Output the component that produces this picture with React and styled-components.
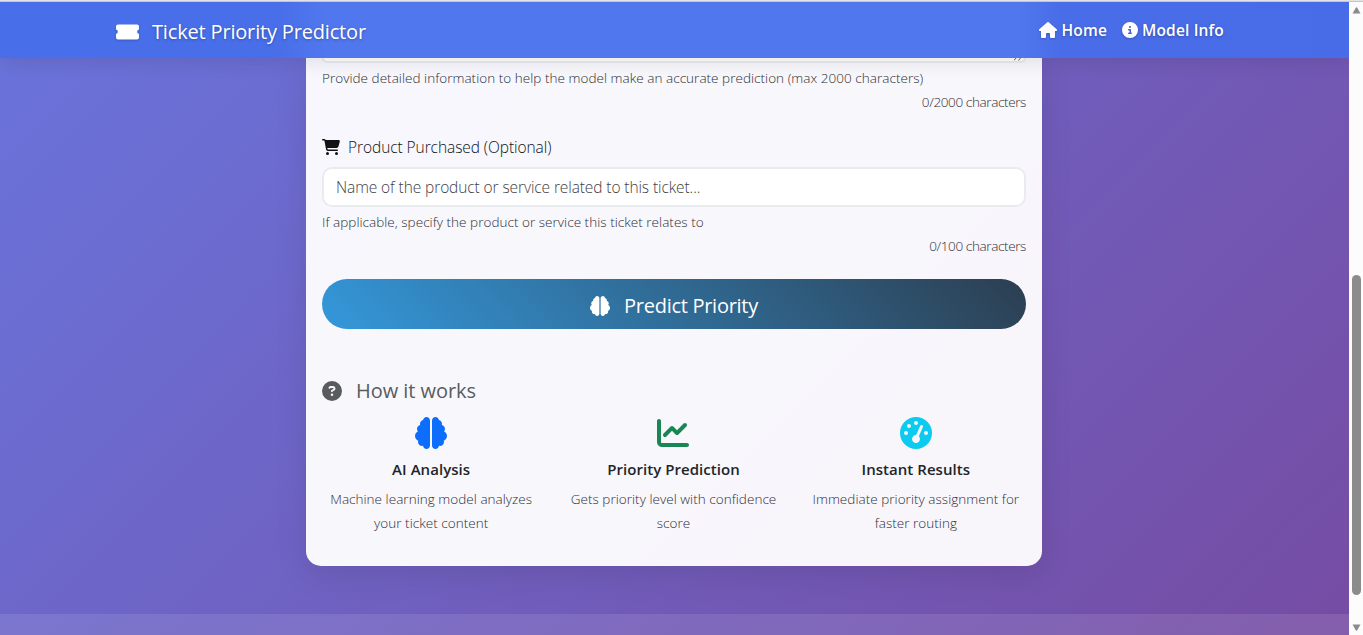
import React from "react";
import styled, { createGlobalStyle } from "styled-components";
import {
  FaHouse, FaCircleInfo, FaCartShopping, FaBrain,
  FaChartLine, FaGaugeHigh, FaCircleQuestion,
} from "react-icons/fa6";

const Global = createGlobalStyle`
  * { box-sizing: border-box; }
  html, body, #root { margin: 0; height: 100%; overflow: hidden; }
  body { font-family: "Open Sans", "Noto Sans", sans-serif; font-size: 16px; line-height: 24px; color: #212529; }
`;

const Window = styled.div`
  height: 635px;
  display: flex;
  flex-direction: column;
  border-top: 1px solid #e3e3e6;
`;
const Viewport = styled.div`
  flex: 1;
  min-height: 0;
  display: flex;
  border-top: 1px solid #c4c6cc;
`;
const Page = styled.div`
  flex: 1;
  display: flex;
  flex-direction: column;
  overflow: hidden;
  background: linear-gradient(135deg, #667eea 0%, #764ba2 100%) 0 -514px / 100% 1197px no-repeat;
`;
const Navbar = styled.header`
  position: relative;
  z-index: 2;
  flex: none;
  height: 56px;
  padding: 0 125px 0 116px;
  display: flex;
  justify-content: space-between;
  background: linear-gradient(90deg, #486fe9 0, #486fe9 280px, #5077ed 325px, #5077ed 1020px, #496de8 1060px, #486ce8 100%);
  box-shadow: 0 4px 20px rgba(0, 0, 0, 0.1);
  color: #fff;
  text-shadow: 0 1px 3px rgba(0, 0, 0, 0.3);
  svg { filter: drop-shadow(0 1px 1px rgba(0, 0, 0, 0.2)); }
`;
const Brand = styled.div`
  display: flex;
  align-items: center;
  gap: 13px;
  padding-top: 4px;
  font-size: 20px;
  letter-spacing: -0.17px;
`;
const Nav = styled.nav`
  display: flex;
  align-items: center;
  gap: 15px;
`;
const NavLink = styled.a`
  display: flex;
  align-items: center;
  gap: 4px;
  font-size: 15.5px;
  font-weight: 600;
  letter-spacing: 0.17px;
`;
const Main = styled.main`
  flex: 1;
  display: flex;
  flex-direction: column;
  align-items: center;
  padding-right: 1px;
`;
const Card = styled.section`
  width: 736px;
  height: 508px;
  padding: 0 16px;
  border-radius: 0 0 15px 15px;
  background: rgba(255, 255, 255, 0.95);
  box-shadow: 0 8px 32px rgba(0, 0, 0, 0.1);
`;
const TextareaEnd = styled.div`
  height: 5px;
  margin-bottom: 3px;
  display: flex;
  justify-content: flex-end;
  padding-right: 3px;
  border: 2px solid #e9ecef;
  border-top: 0;
  border-radius: 0 0 10px 10px;
  background: #fff;
`;
const Small = styled.div`
  font-size: 13.5px;
  font-weight: 300;
  color: #2c2f33;
  letter-spacing: ${(p) => p.$track ?? 0.035}px;
  text-align: ${(p) => p.$align || "left"};
  white-space: nowrap;
`;
const Label = styled.label`
  display: flex;
  align-items: center;
  gap: 8px;
  margin: 21px 0 8px;
  font-size: 15.5px;
  font-weight: 300;
  color: #101214;
  letter-spacing: -0.07px;
`;
const Input = styled.input`
  display: block;
  width: 100%;
  height: 40px;
  margin-bottom: 3px;
  padding: 0 12px;
  border: 2px solid #e9ecef;
  border-radius: 10px;
  background: #fff;
  font: 300 15.5px "Open Sans", sans-serif;
  letter-spacing: -0.1px;
  &::placeholder { color: #3e4145; opacity: 1; }
`;
const PredictButton = styled.button`
  display: flex;
  align-items: center;
  justify-content: center;
  gap: 14px;
  width: 100%;
  height: 50px;
  margin: 21px 0 48px;
  padding: 3px 0 0;
  border: 0;
  border-radius: 25px;
  background: linear-gradient(45deg, #3498db, #2c3e50);
  color: #fff;
  font: 20px "Open Sans", sans-serif;
  letter-spacing: -0.28px;
`;
const Heading = styled.h2`
  display: flex;
  align-items: center;
  gap: 14px;
  height: 28px;
  margin: 0 0 12px;
  color: #595c5f;
  font-size: 20px;
  font-weight: 400;
  letter-spacing: -0.05px;
`;
const Features = styled.div`
  display: grid;
  grid-template-columns: repeat(3, 1fr);
  margin: 0 -11px 0 -12px;
`;
const Feature = styled.div`
  display: flex;
  flex-direction: column;
  align-items: center;
  color: ${(p) => p.$color};
`;
const FeatureTitle = styled.h3`
  margin: 8px 0 6px;
  color: #212529;
  font-size: 15px;
  font-weight: 600;
  letter-spacing: 0.05px;
`;
const Footer = styled.footer`
  height: 21px;
  flex: none;
  background: rgba(255, 255, 255, 0.1);
`;
const Scrollbar = styled.div`
  width: 14px;
  display: flex;
  flex-direction: column;
  align-items: center;
  justify-content: space-between;
  padding: 5px 0 4px;
  background: #fcfcfc;
`;
const Thumb = styled.div`
  width: 9px;
  height: 320px;
  margin-top: 260px;
  margin-bottom: 28px;
  margin-left: 1px;
  border-radius: 5px;
  background: #8b8b8b;
`;
const ArrowIcon = styled.svg`
  flex: none;
`;

const Arrow = ({ down }) => (
  <ArrowIcon width="9" height="7" viewBox="0 0 9 7">
    <path d={down ? "M0.5 0.5h8L5.2 6.3q-.7 1-1.4 0Z" : "M0.5 6.5h8L5.2.7q-.7-1-1.4 0Z"} fill="#8b8b8b" />
  </ArrowIcon>
);

const Ticket = () => (
  <svg width="23" height="16" viewBox="0 0 23 16" fill="currentColor">
    <path d="M2 .5h19a2 2 0 0 1 2 2v3a2.3 2.3 0 0 0 0 4.500v3.500a2 2 0 0 1-2 2H2a2 2 0 0 1-2-2V10a2.300 2.300 0 0 0 0-4.500v-3a2 2 0 0 1 2-2Z" />
  </svg>
);

const features = [
  { Icon: FaBrain, color: "#0d6efd", title: "AI Analysis", lines: ["Machine learning model analyzes", "your ticket content"] },
  { Icon: FaChartLine, color: "#198754", title: "Priority Prediction", lines: ["Gets priority level with confidence", "score"] },
  { Icon: FaGaugeHigh, color: "#0dcaf0", title: "Instant Results", lines: ["Immediate priority assignment for", "faster routing"] },
];

export default function App() {
  return (
    <Window>
      <Global />
      <Viewport>
        <Page>
          <Navbar>
            <Brand><Ticket />Ticket Priority Predictor</Brand>
            <Nav>
              <NavLink><FaHouse size={18} />Home</NavLink>
              <NavLink><FaCircleInfo size={16} />Model Info</NavLink>
            </Nav>
          </Navbar>
          <Main>
            <Card>
              <TextareaEnd>
                <svg width="7" height="3"><path d="M0 2.5 2 0M4.5 2.5 6.5 0" stroke="#666" /></svg>
              </TextareaEnd>
              <Small>Provide detailed information to help the model make an accurate prediction (max 2000 characters)</Small>
              <Small $align="right" $track={-0.37}>0/2000 characters</Small>
              <Label><FaCartShopping size={18} />Product Purchased (Optional)</Label>
              <Input placeholder="Name of the product or service related to this ticket..." />
              <Small>If applicable, specify the product or service this ticket relates to</Small>
              <Small $align="right" $track={-0.37}>0/100 characters</Small>
              <PredictButton><FaBrain size={20} />Predict Priority</PredictButton>
              <Heading><FaCircleQuestion size={20} />How it works</Heading>
              <Features>
                {features.map(({ Icon, color, title, lines }) => (
                  <Feature key={title} $color={color}>
                    <Icon size={32} />
                    <FeatureTitle>{title}</FeatureTitle>
                    {lines.map((text) => <Small key={text}>{text}</Small>)}
                  </Feature>
                ))}
              </Features>
            </Card>
          </Main>
          <Footer />
        </Page>
        <Scrollbar><Arrow /><Thumb /><Arrow down /></Scrollbar>
      </Viewport>
    </Window>
  );
}
